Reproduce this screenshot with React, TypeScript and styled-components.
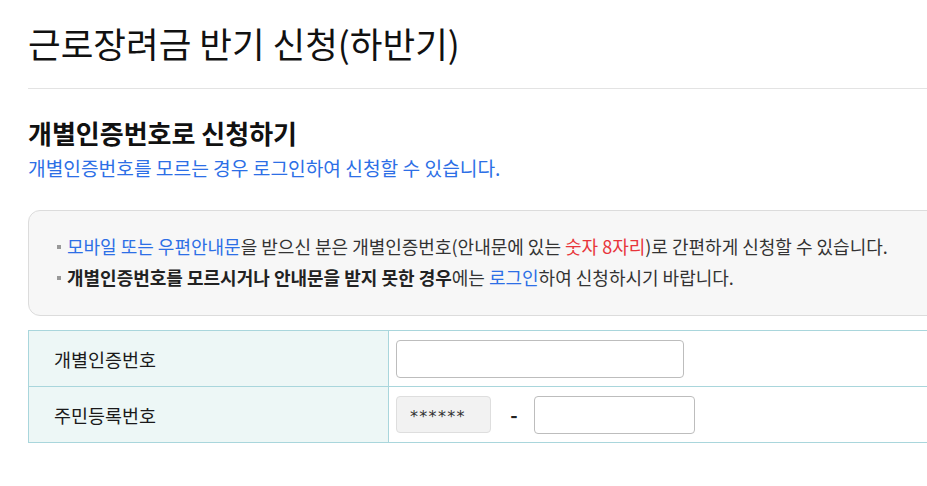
import React from "react";
import styled, { createGlobalStyle } from "styled-components";

const Global = createGlobalStyle`
  html, body { margin: 0; padding: 0; background: #fff; overflow: hidden; }
  body { font-family: "Noto Sans CJK KR", "Noto Sans", sans-serif; color: #222; }
  * { box-sizing: border-box; }
`;

const Page = styled.div`
  width: 1000px;
  padding: 19px 0 0 28px;
`;

const Title = styled.h1`
  margin: 0;
  font-size: 35.5px;
  font-weight: 400;
  line-height: 48px;
  color: #111;
`;

const Rule = styled.hr`
  margin: 21px 0 0;
  border: 0;
  border-top: 1px solid #e3e3e3;
`;

const SectionTitle = styled.h2`
  margin: 26px 0 0;
  font-size: 26px;
  font-weight: 700;
  line-height: 36px;
  color: #111;
`;

const SubText = styled.p`
  margin: 2px 0 0;
  font-size: 19.2px;
  line-height: 30px;
  color: #2d6fe6;
`;

const Notice = styled.div`
  margin-top: 27px;
  border: 1px solid #dcdcdc;
  border-radius: 12px;
  background: #f7f7f7;
  padding: 20px 28px 22px;
`;

const NoticeList = styled.ul`
  margin: 0;
  padding: 0;
  list-style: none;
  display: flex;
  flex-direction: column;
`;

const NoticeItem = styled.li`
  position: relative;
  padding-left: 10px;
  font-size: 18px;
  line-height: 31px;
  color: #333;
  white-space: nowrap;
  &::before {
    content: "";
    position: absolute;
    left: 0;
    top: 14px;
    width: 4px;
    height: 4px;
    background: #999;
  }
`;

const Hl = styled.span<{ $tone: "blue" | "red" | "bold" }>`
  color: ${(p) => (p.$tone === "blue" ? "#2d6fe6" : p.$tone === "red" ? "#e8353b" : "#222")};
  font-weight: ${(p) => (p.$tone === "bold" ? 700 : 400)};
`;

const Table = styled.div`
  margin-top: 14px;
  border-top: 1px solid #a9d6dc;
  display: grid;
  grid-template-columns: 361px 1fr;
`;

const Label = styled.div`
  height: 56px;
  background: #edf7f6;
  border-left: 1px solid #a9d6dc;
  border-right: 1px solid #a9d6dc;
  border-bottom: 1px solid #a9d6dc;
  display: flex;
  align-items: center;
  padding-left: 25px;
  font-size: 18.5px;
  color: #1a1a1a;
`;

const Cell = styled.div`
  height: 56px;
  border-bottom: 1px solid #a9d6dc;
  display: flex;
  align-items: center;
  padding-left: 7px;
`;

const Input = styled.input<{ $w: number }>`
  width: ${(p) => p.$w}px;
  height: 38px;
  border: 1px solid #bdbdbd;
  border-radius: 4px;
  background: #fff;
  outline: none;
  font-family: inherit;
  font-size: 16px;
  padding: 0 10px;
`;

const Masked = styled.div`
  width: 95px;
  height: 37px;
  border: 1px solid #dedede;
  border-radius: 4px;
  background: #f2f2f2;
  display: flex;
  align-items: center;
  padding: 3px 0 0 13px;
  font-family: "DejaVu Sans", sans-serif;
  font-size: 16px;
  letter-spacing: 1.3px;
  color: #333;
`;

const Dash = styled.span`
  width: 43px;
  padding-left: 3px;
  text-align: center;
  font-size: 20px;
  font-weight: 700;
  color: #222;
`;

export default function App() {
  return (
    <Page>
      <Global />
      <Title>근로장려금 반기 신청(하반기)</Title>
      <Rule />
      <SectionTitle>개별인증번호로 신청하기</SectionTitle>
      <SubText>개별인증번호를 모르는 경우 로그인하여 신청할 수 있습니다.</SubText>
      <Notice>
        <NoticeList>
          <NoticeItem>
            <Hl $tone="blue">모바일 또는 우편안내문</Hl>을 받으신 분은 개별인증번호(안내문에 있는{" "}
            <Hl $tone="red">숫자 8자리</Hl>)로 간편하게 신청할 수 있습니다.
          </NoticeItem>
          <NoticeItem>
            <Hl $tone="bold">개별인증번호를 모르시거나 안내문을 받지 못한 경우</Hl>에는{" "}
            <Hl $tone="blue">로그인</Hl>하여 신청하시기 바랍니다.
          </NoticeItem>
        </NoticeList>
      </Notice>
      <Table>
        <Label>개별인증번호</Label>
        <Cell>
          <Input $w={288} />
        </Cell>
        <Label>주민등록번호</Label>
        <Cell>
          <Masked>******</Masked>
          <Dash>-</Dash>
          <Input $w={161} />
        </Cell>
      </Table>
    </Page>
  );
}
